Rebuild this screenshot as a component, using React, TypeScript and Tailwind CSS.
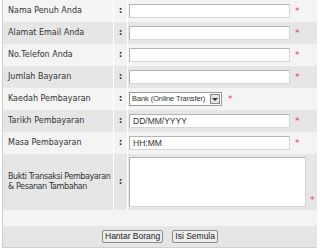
const font = { fontFamily: '"DejaVu Sans", Verdana, sans-serif' };
const arial = { fontFamily: '"Liberation Sans", Arial, sans-serif' };

function Star({ className = "" }: { className?: string }) {
  return <span className={`text-[9px] leading-none text-[#e0405a] ${className}`}>*</span>;
}

type Row = { label: React.ReactNode; field: React.ReactNode; star?: boolean; tall?: boolean };

function TextInput({ value = "" }: { value?: string }) {
  return (
    <div
      className="h-[14px] w-[161px] border border-[#b5b5b5] border-b-[#d6d6d6] border-r-[#d6d6d6] bg-white px-[3px] text-[8.5px] leading-[12px] text-[#333]"
      style={arial}
    >
      {value}
    </div>
  );
}

function App() {
  const rows: Row[] = [
    { label: "Nama Penuh Anda", field: <TextInput />, star: true },
    { label: "Alamat Email Anda", field: <TextInput />, star: true },
    { label: "No.Telefon Anda", field: <TextInput />, star: true },
    { label: "Jumlah Bayaran", field: <TextInput />, star: true },
    {
      label: "Kaedah Pembayaran",
      field: (
        <div className="flex items-center gap-[6px]">
          <div
            className="flex h-[14px] w-[93px] items-center border border-[#9a9a9a] bg-white pl-[2px] text-[7.5px] leading-[12px] tracking-[-0.1px] text-[#333]"
            style={arial}
          >
            <span className="flex-1 overflow-hidden whitespace-nowrap">Bank (Online Transfer)</span>
            <span className="mr-[1px] flex h-[10px] w-[10px] items-center justify-center border border-[#8a8a8a] bg-[#e4e4e4]">
              <span className="h-0 w-0 border-x-[3px] border-t-[3px] border-x-transparent border-t-[#333]" />
            </span>
          </div>
          <Star />
        </div>
      ),
    },
    { label: "Tarikh Pembayaran", field: <TextInput value="DD/MM/YYYY" />, star: true },
    { label: "Masa Pembayaran", field: <TextInput value="HH:MM" />, star: true },
    {
      label: (
        <span className="tracking-[-0.4px]">
          Bukti Transaksi Pembayaran
          <br />& Pesanan Tambahan
        </span>
      ),
      tall: true,
      field: (
        <div className="relative flex items-end gap-[4px]">
          <div className="h-[50px] w-[177px] border border-[#b5b5b5] border-b-[#d6d6d6] border-r-[#d6d6d6] bg-white" />
          <Star className="mb-[2px]" />
        </div>
      ),
    },
  ];

  return (
    <div className="h-[248px] w-[320px] bg-white pl-[2px] pr-[3px] pt-0" style={font}>
      <div className="border-b border-l border-[#cfcfcf]">
        {rows.map((r, i) => (
          <div
            key={i}
            className={`flex ${r.tall ? "h-[56px]" : "h-[22px]"} ${i % 2 === 0 ? "bg-[#f4f4f4]" : "bg-[#e6e6e6]"}`}
          >
            <div className="flex w-[111px] items-center whitespace-nowrap border-r border-white pl-[5px] text-[8px] leading-[10px] text-[#333]">
              {r.label}
            </div>
            <div className="flex w-[14px] items-center justify-center border-r border-white text-[9px] font-bold text-[#333]">
              :
            </div>
            <div className="flex flex-1 items-center pl-[1px]">
              {r.field}
              {r.star && <Star className="ml-[5px]" />}
            </div>
          </div>
        ))}
        <div className="h-[16px] bg-[#f4f4f4]" />
        <div className="flex h-[21px] items-center justify-center gap-[9px] bg-[#e6e6e6]" style={arial}>
          <button className="h-[13px] rounded-[2px] border border-[#8a8a8a] bg-[#eeeeee] px-[2px] text-[8.5px] leading-[11px] text-[#222]">
            Hantar Borang
          </button>
          <button className="h-[13px] rounded-[2px] border border-[#8a8a8a] bg-[#eeeeee] px-[2px] text-[8.5px] leading-[11px] text-[#222]">
            Isi Semula
          </button>
        </div>
      </div>
    </div>
  );
}

export default App;
